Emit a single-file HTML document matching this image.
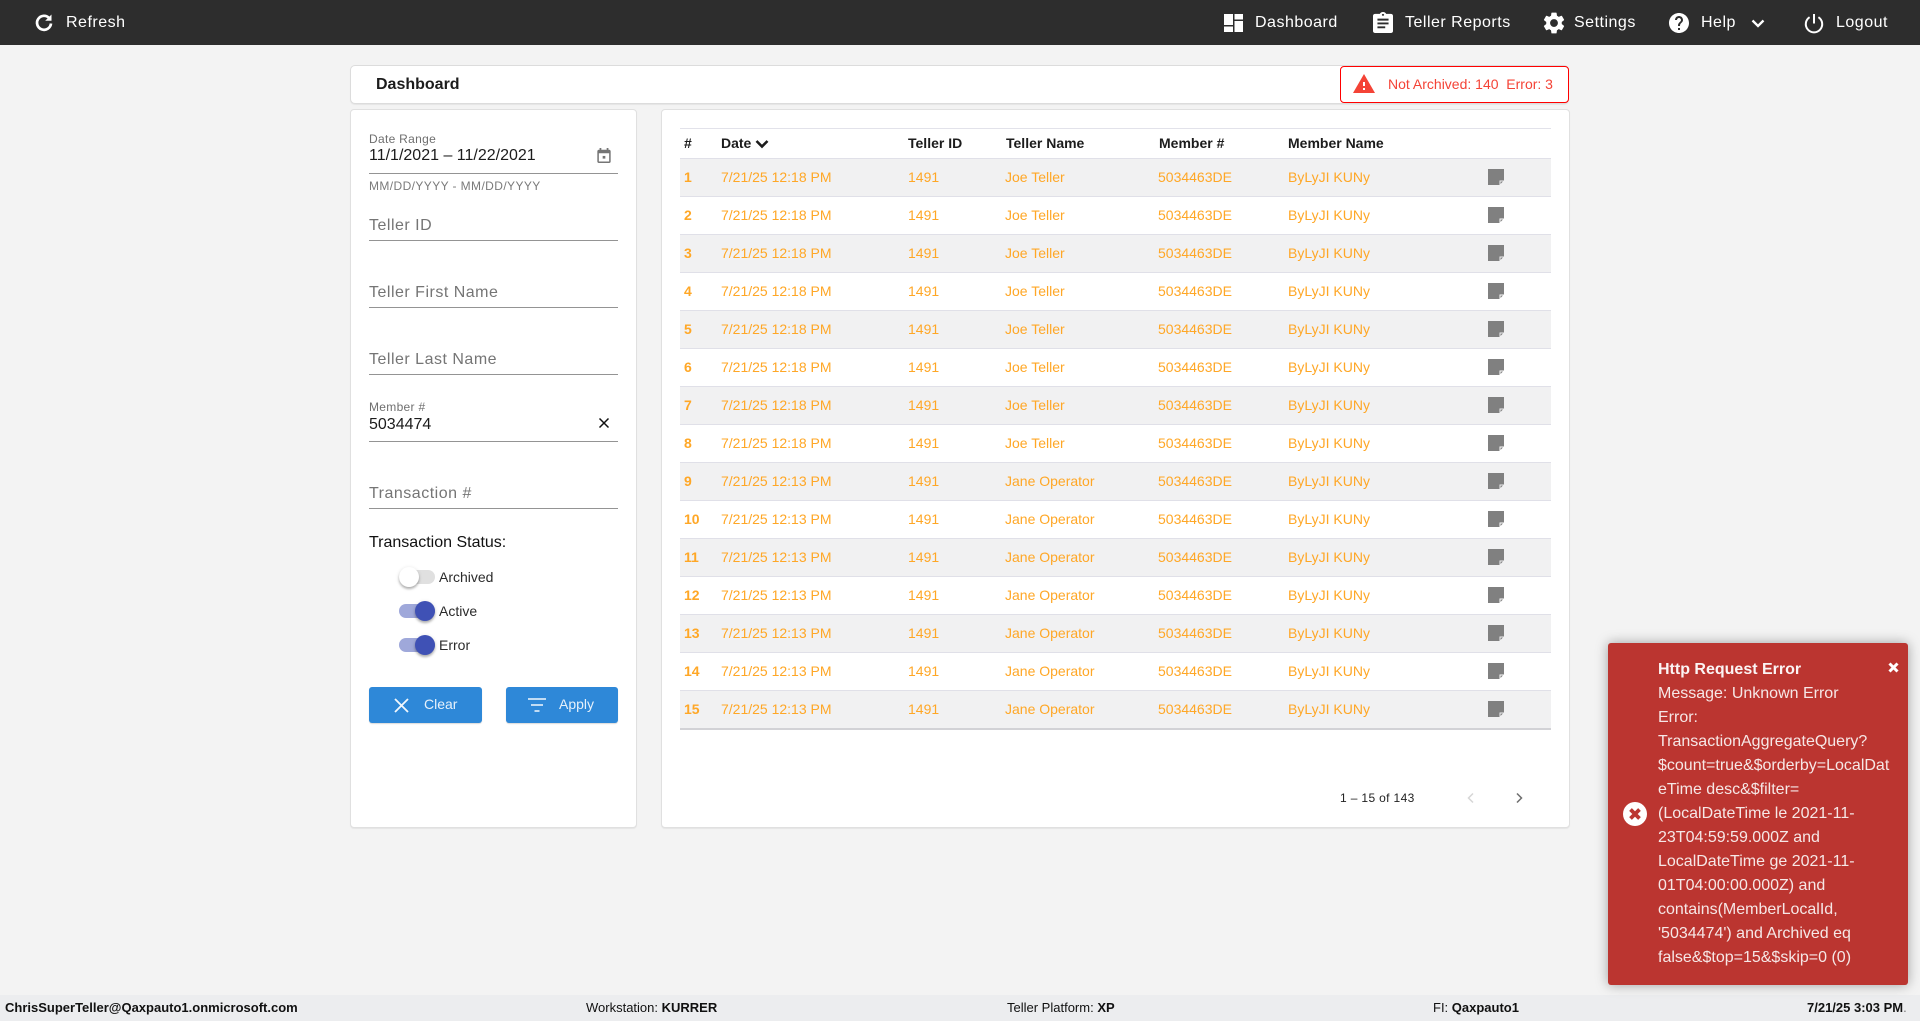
<!DOCTYPE html>
<html lang="en"><head><meta charset="utf-8"><title>Dashboard</title>
<style>
*{box-sizing:border-box}
html,body{margin:0;padding:0;width:1920px;height:1021px;overflow:hidden;background:#f3f3f3;font-family:"Liberation Sans",Arial,sans-serif}
.a{position:absolute;white-space:nowrap}
svg{position:absolute;display:block}
.nav{position:absolute;left:0;top:0;width:1920px;height:45px;background:#2d2d2d}
.n{position:absolute;top:13px;font-size:16px;line-height:19px;letter-spacing:.5px;color:#fff;white-space:nowrap}
.card{position:absolute;background:#fff;border:1px solid #e0e0e0;border-radius:4px;box-shadow:0 1px 1px rgba(0,0,0,.06)}
.ul{position:absolute;left:369px;width:249px;height:1px;background:#949494}
.ph{position:absolute;left:369px;font-size:16px;line-height:20px;letter-spacing:.5px;color:#757575;white-space:nowrap}
.lb{position:absolute;left:369px;font-size:12px;line-height:14px;letter-spacing:.3px;color:#6f6f6f;white-space:nowrap}
.v{position:absolute;left:369px;font-size:16px;line-height:20px;color:#1c1c1c;white-space:nowrap}
.trk{position:absolute;left:399px;width:36px;height:14px;border-radius:7px}
.th{position:absolute;width:20px;height:20px;border-radius:50%;box-shadow:0 2px 2px rgba(0,0,0,.24),0 1px 4px rgba(0,0,0,.14)}
.tl{position:absolute;left:439px;font-size:14px;line-height:16px;color:#2b2b2b;white-space:nowrap}
.btn{position:absolute;top:687px;height:36px;background:#2e88d8;border-radius:3px;box-shadow:0 1px 1px rgba(0,0,0,.15)}
.btxt{position:absolute;top:696px;font-size:14px;line-height:16px;color:#e6f1fb;white-space:nowrap}
table{position:absolute;left:680px;top:128px;width:871px;border-collapse:collapse;table-layout:fixed;border-top:1px solid #e2e2ea}
th{height:30px;padding:0 0 2px;font-size:14px;font-weight:700;color:#1c1c1c;text-align:left;border-bottom:1px solid #e0e0e8;white-space:nowrap}
td{height:38px;padding:0 0 2px;font-size:14px;color:#ffa726;border-bottom:1px solid #e0e0e8;white-space:nowrap;position:relative}
tr.o td{background:#f1f1f2}
tr.last td{border-bottom:2px solid #d2d2d6;padding-bottom:1px}
td:first-child{font-weight:700;padding-left:4px}
th:first-child{padding-left:4px}
td:nth-child(4),td:nth-child(5){text-indent:-1px}
.note{display:block;width:16px;height:16px;position:relative;top:0}
.ft{position:absolute;left:0;top:995px;width:1920px;height:26px;background:#ecedef}
.f{position:absolute;top:1000px;font-size:13px;line-height:15px;color:#111;white-space:nowrap}
.toast{position:absolute;left:1608px;top:643px;width:300px;height:342px;background:#bb3530;border-radius:3px;box-shadow:0 0 12px rgba(0,0,0,.35)}
.tt{position:absolute;left:1658px;top:658px;font-size:16px;line-height:24px;color:#f6e7e6;white-space:nowrap}
</style></head><body>

<div class="nav"></div>
<svg style="left:34px;top:13px" width="20" height="20" viewBox="0 0 20 20"><path d="M15.3 5.2A7 7 0 1 0 17 10.500" fill="none" stroke="#fff" stroke-width="2.700"/><path d="M11.200 7.800h6.300V1.500z" fill="#fff"/></svg>
<div class="n" style="left:66px">Refresh</div>

<svg style="left:1224px;top:14px" width="19" height="18" viewBox="0 0 19 18"><path fill="#fff" d="M0 0h9v11H0zM0 12.500h9V18H0zM10.500 0H19v5.500h-8.500zM10.500 7H19v11h-8.500z"/></svg>
<div class="n" style="left:1255px">Dashboard</div>
<svg style="left:1373px;top:12px" width="20" height="21" viewBox="3 1 18 22" preserveAspectRatio="none"><path fill="#fff" d="M19 3h-4.180C14.400 1.840 13.300 1 12 1c-1.300 0-2.400.84-2.820 2H5c-1.100 0-2 .9-2 2v16c0 1.100.9 2 2 2h14c1.100 0 2-.9 2-2V5c0-1.100-.9-2-2-2zm-7 0c.55 0 1 .45 1 1s-.45 1-1 1-1-.45-1-1 .45-1 1-1zm2 15H7v-2h7v2zm3-4H7v-2h10v2zm0-4H7V8h10v2z"/></svg>
<div class="n" style="left:1405px">Teller Reports</div>
<svg style="left:1541px;top:10px" width="26" height="26" viewBox="0 0 24 24"><path fill="#fff" d="M19.14 12.94c.04-.3.06-.61.06-.94 0-.32-.02-.64-.07-.94l2.03-1.58c.18-.14.23-.41.12-.61l-1.92-3.32c-.12-.22-.37-.29-.59-.22l-2.39.96c-.5-.38-1.03-.7-1.62-.94l-.36-2.54c-.04-.24-.24-.41-.48-.41h-3.84c-.24 0-.43.17-.47.41l-.36 2.54c-.59.24-1.13.57-1.62.94l-2.39-.96c-.22-.08-.47 0-.59.22L2.74 8.87c-.12.21-.08.47.12.61l2.03 1.58c-.05.3-.09.63-.09.94s.02.64.07.94l-2.03 1.58c-.18.14-.23.41-.12.61l1.92 3.32c.12.22.37.29.59.22l2.39-.96c.5.38 1.03.7 1.62.94l.36 2.54c.05.24.24.41.48.41h3.84c.24 0 .44-.17.47-.41l.36-2.54c.59-.24 1.13-.56 1.62-.94l2.39.96c.22.08.47 0 .59-.22l1.92-3.32c.12-.22.07-.47-.12-.61l-2.01-1.58zM12 15.600c-1.980 0-3.600-1.620-3.600-3.600s1.620-3.600 3.600-3.600 3.600 1.620 3.600 3.600-1.620 3.600-3.600 3.600z"/></svg>
<div class="n" style="left:1574px">Settings</div>
<svg style="left:1669px;top:13px" width="20" height="20" viewBox="2 2 20 20"><path fill="#fff" d="M12 2C6.480 2 2 6.480 2 12s4.480 10 10 10 10-4.480 10-10S17.520 2 12 2zm1 17h-2v-2h2v2zm2.070-7.750l-.9.92C13.450 12.900 13 13.500 13 15h-2v-.5c0-1.100.45-2.100 1.170-2.830l1.240-1.260c.37-.36.59-.86.59-1.410 0-1.100-.9-2-2-2s-2 .9-2 2H8c0-2.210 1.790-4 4-4s4 1.790 4 4c0 .88-.36 1.680-.93 2.250z"/></svg>
<div class="n" style="left:1701px">Help</div>
<svg style="left:1751px;top:18px" width="14" height="11" viewBox="0 0 14 11"><path d="M1.500 2.500L7 8l5.500-5.500" fill="none" stroke="#fff" stroke-width="2.300"/></svg>
<svg style="left:1803px;top:12px" width="22" height="22" viewBox="0 0 22 22"><path d="M6.600 5.200a8.200 8.200 0 1 0 8.800 0" fill="none" stroke="#fff" stroke-width="2"/><path d="M11 2v9.500" stroke="#fff" stroke-width="2" fill="none"/></svg>
<div class="n" style="left:1836px">Logout</div>

<!-- title bar -->
<div class="card" style="left:350px;top:65px;width:1219px;height:39px;border:1px solid #dcdcdc;border-radius:5px"></div>
<div class="a" style="left:376px;top:75px;font-size:16px;line-height:19px;font-weight:700;color:#1c1c1c">Dashboard</div>
<div class="a" style="left:1340px;top:66px;width:229px;height:37px;background:#fff;border:1px solid #f00;border-radius:4px"></div>
<svg style="left:1353px;top:74px" width="22" height="19" viewBox="1 2 22 19"><path fill="#f44336" d="M1 21h22L12 2 1 21zm12-3h-2v-2h2v2zm0-4h-2v-4h2v4z"/></svg>
<div class="a" style="left:1388px;top:76px;font-size:14px;line-height:16px;color:#f44336;white-space:pre">Not Archived: 140  Error: 3</div>

<!-- filters -->
<div class="card" style="left:350px;top:109px;width:287px;height:719px"></div>
<div class="lb" style="left:369px;top:132px">Date Range</div>
<div class="v" style="top:146px">11/1/2021 – 11/22/2021</div>
<svg style="left:596px;top:147px" width="16" height="17" viewBox="0 0 18 19"><path fill="#757575" d="M4 1h2v2h6V1h2v2h.8c1 0 1.700.8 1.700 1.700v11.600c0 1-.8 1.700-1.700 1.700H3.200c-1 0-1.700-.8-1.700-1.700V4.700C1.500 3.800 2.200 3 3.200 3H4zM3.200 7v9.300h11.600V7z"/><rect x="7.500" y="10" width="3" height="3" fill="#757575"/></svg>
<div class="ul" style="top:173px"></div>
<div class="lb" style="top:179px;font-size:12px;letter-spacing:.4px;color:#7a7a7a">MM/DD/YYYY - MM/DD/YYYY</div>
<div class="ph" style="top:216px">Teller ID</div>
<div class="ul" style="top:240px"></div>
<div class="ph" style="top:283px">Teller First Name</div>
<div class="ul" style="top:307px"></div>
<div class="ph" style="top:350px">Teller Last Name</div>
<div class="ul" style="top:374px"></div>
<div class="lb" style="top:400px">Member #</div>
<div class="v" style="top:415px">5034474</div>
<svg style="left:598px;top:417px" width="12" height="12" viewBox="0 0 12 12"><path d="M1.500 1.500l9 9M10.500 1.500l-9 9" stroke="#111" stroke-width="1.500" fill="none"/></svg>
<div class="ul" style="top:441px"></div>
<div class="ph" style="top:484px">Transaction #</div>
<div class="ul" style="top:508px"></div>
<div class="a" style="left:369px;top:533px;font-size:16px;line-height:19px;color:#111">Transaction Status:</div>

<div class="trk" style="top:570px;background:#e0e0e0"></div>
<div class="th" style="left:399px;top:567px;background:#fff"></div>
<div class="tl" style="top:569px">Archived</div>
<div class="trk" style="top:604px;background:#9fa8da"></div>
<div class="th" style="left:415px;top:601px;background:#3f51b5"></div>
<div class="tl" style="top:603px">Active</div>
<div class="trk" style="top:638px;background:#9fa8da"></div>
<div class="th" style="left:415px;top:635px;background:#3f51b5"></div>
<div class="tl" style="top:637px">Error</div>

<div class="btn" style="left:369px;width:113px"></div>
<svg style="left:393px;top:697px" width="17" height="17" viewBox="0 0 17 17"><path d="M2 2l13 13M15 2L2 15" stroke="#f2f8fd" stroke-width="1.800" fill="none"/></svg>
<div class="btxt" style="left:424px">Clear</div>
<div class="btn" style="left:506px;width:112px"></div>
<svg style="left:527px;top:697px" width="20" height="16" viewBox="0 0 20 16"><path d="M1 2h18M4 8h12M7.500 14h5" stroke="#f2f8fd" stroke-width="1.600" fill="none"/></svg>
<div class="btxt" style="left:559px">Apply</div>

<!-- table -->
<div class="card" style="left:661px;top:109px;width:909px;height:719px"></div>
<table>
<colgroup><col style="width:41px"><col style="width:187px"><col style="width:98px"><col style="width:153px"><col style="width:129px"><col style="width:200px"><col style="width:63px"></colgroup>
<thead><tr><th>#</th><th>Date <svg style="position:static;display:inline-block;vertical-align:-1px" width="14" height="10" viewBox="0 0 14 10"><path d="M1.500 2l5.500 5.500L12.500 2" fill="none" stroke="#1c1c1c" stroke-width="2.600"/></svg></th><th>Teller ID</th><th>Teller Name</th><th>Member #</th><th>Member Name</th><th></th></tr></thead>
<tbody>
<tr class="o"><td>1</td><td>7/21/25 12:18 PM</td><td>1491</td><td>Joe Teller</td><td>5034463DE</td><td>ByLyJI KUNy</td><td><svg class="note" style="position:relative" viewBox="0 0 16 16"><path fill="#808080" d="M0 0h16v11.500h-4.500V16H0z"/><path fill="#808080" d="M12.500 12.500H15L12.500 15z"/></svg></td></tr>
<tr><td>2</td><td>7/21/25 12:18 PM</td><td>1491</td><td>Joe Teller</td><td>5034463DE</td><td>ByLyJI KUNy</td><td><svg class="note" style="position:relative" viewBox="0 0 16 16"><path fill="#808080" d="M0 0h16v11.500h-4.500V16H0z"/><path fill="#808080" d="M12.500 12.500H15L12.500 15z"/></svg></td></tr>
<tr class="o"><td>3</td><td>7/21/25 12:18 PM</td><td>1491</td><td>Joe Teller</td><td>5034463DE</td><td>ByLyJI KUNy</td><td><svg class="note" style="position:relative" viewBox="0 0 16 16"><path fill="#808080" d="M0 0h16v11.500h-4.500V16H0z"/><path fill="#808080" d="M12.500 12.500H15L12.500 15z"/></svg></td></tr>
<tr><td>4</td><td>7/21/25 12:18 PM</td><td>1491</td><td>Joe Teller</td><td>5034463DE</td><td>ByLyJI KUNy</td><td><svg class="note" style="position:relative" viewBox="0 0 16 16"><path fill="#808080" d="M0 0h16v11.500h-4.500V16H0z"/><path fill="#808080" d="M12.500 12.500H15L12.500 15z"/></svg></td></tr>
<tr class="o"><td>5</td><td>7/21/25 12:18 PM</td><td>1491</td><td>Joe Teller</td><td>5034463DE</td><td>ByLyJI KUNy</td><td><svg class="note" style="position:relative" viewBox="0 0 16 16"><path fill="#808080" d="M0 0h16v11.500h-4.500V16H0z"/><path fill="#808080" d="M12.500 12.500H15L12.500 15z"/></svg></td></tr>
<tr><td>6</td><td>7/21/25 12:18 PM</td><td>1491</td><td>Joe Teller</td><td>5034463DE</td><td>ByLyJI KUNy</td><td><svg class="note" style="position:relative" viewBox="0 0 16 16"><path fill="#808080" d="M0 0h16v11.500h-4.500V16H0z"/><path fill="#808080" d="M12.500 12.500H15L12.500 15z"/></svg></td></tr>
<tr class="o"><td>7</td><td>7/21/25 12:18 PM</td><td>1491</td><td>Joe Teller</td><td>5034463DE</td><td>ByLyJI KUNy</td><td><svg class="note" style="position:relative" viewBox="0 0 16 16"><path fill="#808080" d="M0 0h16v11.500h-4.500V16H0z"/><path fill="#808080" d="M12.500 12.500H15L12.500 15z"/></svg></td></tr>
<tr><td>8</td><td>7/21/25 12:18 PM</td><td>1491</td><td>Joe Teller</td><td>5034463DE</td><td>ByLyJI KUNy</td><td><svg class="note" style="position:relative" viewBox="0 0 16 16"><path fill="#808080" d="M0 0h16v11.500h-4.500V16H0z"/><path fill="#808080" d="M12.500 12.500H15L12.500 15z"/></svg></td></tr>
<tr class="o"><td>9</td><td>7/21/25 12:13 PM</td><td>1491</td><td>Jane Operator</td><td>5034463DE</td><td>ByLyJI KUNy</td><td><svg class="note" style="position:relative" viewBox="0 0 16 16"><path fill="#808080" d="M0 0h16v11.500h-4.500V16H0z"/><path fill="#808080" d="M12.500 12.500H15L12.500 15z"/></svg></td></tr>
<tr><td>10</td><td>7/21/25 12:13 PM</td><td>1491</td><td>Jane Operator</td><td>5034463DE</td><td>ByLyJI KUNy</td><td><svg class="note" style="position:relative" viewBox="0 0 16 16"><path fill="#808080" d="M0 0h16v11.500h-4.500V16H0z"/><path fill="#808080" d="M12.500 12.500H15L12.500 15z"/></svg></td></tr>
<tr class="o"><td>11</td><td>7/21/25 12:13 PM</td><td>1491</td><td>Jane Operator</td><td>5034463DE</td><td>ByLyJI KUNy</td><td><svg class="note" style="position:relative" viewBox="0 0 16 16"><path fill="#808080" d="M0 0h16v11.500h-4.500V16H0z"/><path fill="#808080" d="M12.500 12.500H15L12.500 15z"/></svg></td></tr>
<tr><td>12</td><td>7/21/25 12:13 PM</td><td>1491</td><td>Jane Operator</td><td>5034463DE</td><td>ByLyJI KUNy</td><td><svg class="note" style="position:relative" viewBox="0 0 16 16"><path fill="#808080" d="M0 0h16v11.500h-4.500V16H0z"/><path fill="#808080" d="M12.500 12.500H15L12.500 15z"/></svg></td></tr>
<tr class="o"><td>13</td><td>7/21/25 12:13 PM</td><td>1491</td><td>Jane Operator</td><td>5034463DE</td><td>ByLyJI KUNy</td><td><svg class="note" style="position:relative" viewBox="0 0 16 16"><path fill="#808080" d="M0 0h16v11.500h-4.500V16H0z"/><path fill="#808080" d="M12.500 12.500H15L12.500 15z"/></svg></td></tr>
<tr><td>14</td><td>7/21/25 12:13 PM</td><td>1491</td><td>Jane Operator</td><td>5034463DE</td><td>ByLyJI KUNy</td><td><svg class="note" style="position:relative" viewBox="0 0 16 16"><path fill="#808080" d="M0 0h16v11.500h-4.500V16H0z"/><path fill="#808080" d="M12.500 12.500H15L12.500 15z"/></svg></td></tr>
<tr class="o last"><td>15</td><td>7/21/25 12:13 PM</td><td>1491</td><td>Jane Operator</td><td>5034463DE</td><td>ByLyJI KUNy</td><td><svg class="note" style="position:relative" viewBox="0 0 16 16"><path fill="#808080" d="M0 0h16v11.500h-4.500V16H0z"/><path fill="#808080" d="M12.500 12.500H15L12.500 15z"/></svg></td></tr>
</tbody></table>

<div class="a" style="left:1340px;top:791px;font-size:12px;line-height:14px;letter-spacing:.35px;color:#222">1 – 15 of 143</div>
<svg style="left:1466px;top:792px" width="10" height="12" viewBox="0 0 10 12"><path d="M7 1.500L2.500 6 7 10.500" fill="none" stroke="#d6d6d6" stroke-width="1.500"/></svg>
<svg style="left:1514px;top:792px" width="10" height="12" viewBox="0 0 10 12"><path d="M3 1.500L7.500 6 3 10.500" fill="none" stroke="#6e6e6e" stroke-width="1.500"/></svg>

<!-- footer -->
<div class="ft"></div>
<div class="f" style="left:5px;font-weight:700">ChrisSuperTeller@Qaxpauto1.onmicrosoft.com</div>
<div class="f" style="left:586px">Workstation: <b>KURRER</b></div>
<div class="f" style="left:1007px">Teller Platform: <b>XP</b></div>
<div class="f" style="left:1433px">FI: <b>Qaxpauto1</b></div>
<div class="f" style="left:1807px;font-weight:700">7/21/25 3:03 PM<span style="font-weight:400;color:#777">.</span></div>

<!-- toast -->
<div class="toast"></div>
<svg style="left:1623px;top:802px" width="24" height="24" viewBox="0 0 24 24"><circle cx="12" cy="12" r="12" fill="#fff"/><path d="M7.500 7.500l9 9M16.500 7.500l-9 9" stroke="#bb3530" stroke-width="3.800" fill="none"/></svg>
<svg style="left:1888px;top:662px" width="11" height="11" viewBox="0 0 11 11"><path d="M1.500 1.500l8 8M9.500 1.500l-8 8" stroke="#fff" stroke-width="3" fill="none"/></svg>
<div class="tt"><b style="color:#fff;opacity:.95">Http Request Error</b><br>Message: Unknown Error<br>Error:<br>TransactionAggregateQuery?<br>$count=true&amp;$orderby=LocalDat<br>eTime desc&amp;$filter=<br>(LocalDateTime le 2021-11-<br>23T04:59:59.000Z and<br>LocalDateTime ge 2021-11-<br>01T04:00:00.000Z) and<br>contains(MemberLocalId,<br>'5034474') and Archived eq<br>false&amp;$top=15&amp;$skip=0 (0)</div>
</body></html>
